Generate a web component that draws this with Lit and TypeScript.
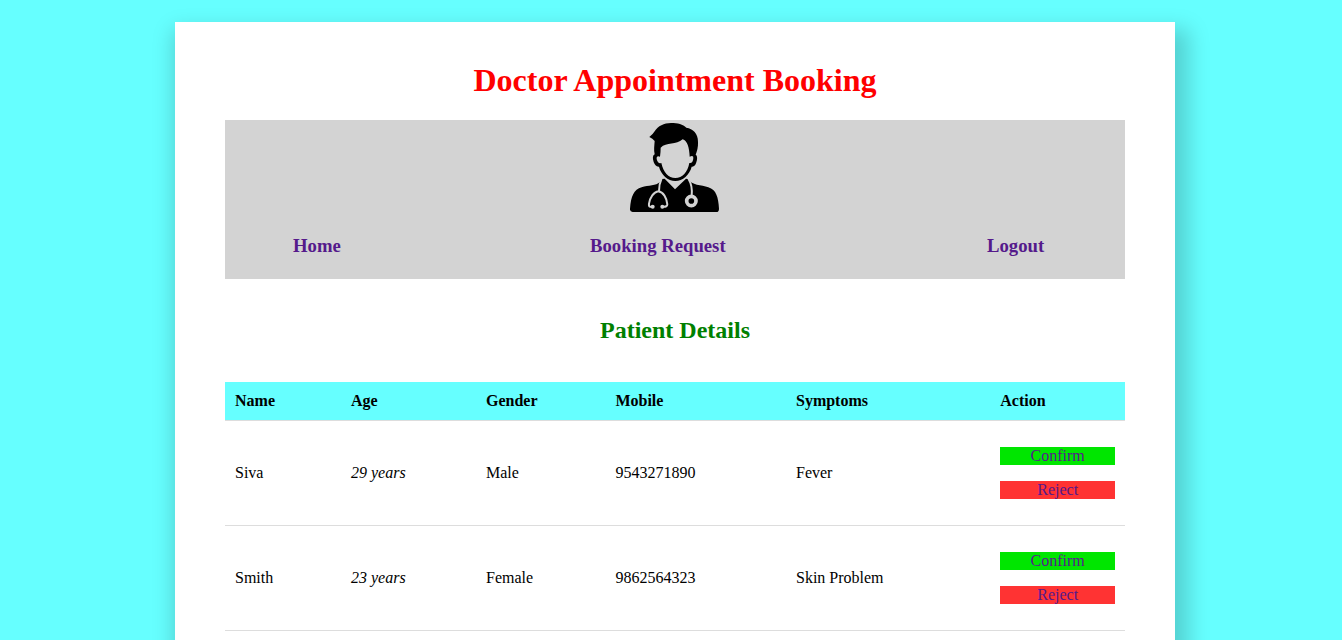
import { LitElement, html, css } from "lit";
import { customElement } from "lit/decorators.js";

interface Patient {
  name: string;
  age: number;
  gender: string;
  mobile: string;
  symptoms: string;
}

const PATIENTS: Patient[] = [
  { name: "Siva", age: 29, gender: "Male", mobile: "9543271890", symptoms: "Fever" },
  { name: "Smith", age: 23, gender: "Female", mobile: "9862564323", symptoms: "Skin Problem" },
];

const COLUMNS = ["Name", "Age", "Gender", "Mobile", "Symptoms", "Action"];

@customElement("app-root")
export class AppRoot extends LitElement {
  static styles = css`
    :host {
      display: block;
      box-sizing: border-box;
      height: 640px;
      overflow: hidden;
      padding: 22px 167px 0 175px;
      background: #66ffff;
      color: #000;
      font: 16px/18px "Liberation Serif", "Times New Roman", serif;
    }
    .card {
      box-sizing: border-box;
      width: 1000px;
      height: 760px;
      padding: 40px 50px 0;
      background: #fff;
      box-shadow: 6px 15px 20px 8px rgba(0, 0, 0, 0.18);
    }
    h1 {
      margin: 0 0 21px;
      font-size: 32px;
      line-height: 37px;
      text-align: center;
      color: #f00;
    }
    .banner {
      box-sizing: border-box;
      height: 159px;
      padding-top: 2px;
      background: #d3d3d3;
    }
    .logo {
      display: block;
      width: 90px;
      height: 90px;
      margin: 0 auto;
    }
    .nav {
      display: grid;
      grid-template-columns: 297px 397px auto;
      padding: 23px 0 0 68px;
      font-size: 18.72px;
      line-height: 21px;
      font-weight: bold;
    }
    a {
      color: #551a8b;
      text-decoration: none;
    }
    h2 {
      margin: 37px 0 38px;
      font-size: 24px;
      line-height: 28px;
      text-align: center;
      color: #008000;
    }
    table {
      width: 900px;
      table-layout: fixed;
      border-collapse: separate;
      border-spacing: 0;
    }
    th, td {
      padding: 10px;
      text-align: left;
      border-bottom: 1px solid #ddd;
    }
    th { background: #66ffff; }
    .c1 { width: 116px; }
    .c2 { width: 135px; }
    .c3 { width: 129.4px; }
    .c4 { width: 180.6px; }
    .c5 { width: 204.3px; }
    .age { font-style: italic; }
    .action {
      margin: 16px 0;
      text-align: center;
    }
    .confirm { background: #00e600; }
    .reject { background: #ff3333; }
    .tube {
      fill: none;
      stroke: #d3d3d3;
      stroke-width: 6;
      stroke-linecap: round;
      stroke-linejoin: round;
    }
    .disc {
      fill: #000;
      stroke: #d3d3d3;
      stroke-width: 11;
    }
  `;

  render() {
    return html`
      <main class="card">
        <h1>Doctor Appointment Booking</h1>
        <header class="banner">
          <svg class="logo" viewBox="30 21 270 270" role="img" aria-label="Doctor">
            <path
              fill-rule="evenodd"
              d="M88 66Q98 59 104 49C114 33 132 24 153 24C173 24 189 28 199 38C219 41 234 55 234 80C235 96 231 108 227 119C233 123 232 133 229 142C226 152 222 156 215 155C209 179 188 198 166 198C144 198 123 179 117 155C109 156 104 149 101 141C97 130 98 121 104 118C101 105 103 92 104 78Q98 71 88 66Z
                 M122 98C139 81 169 90 188 73C202 78 208 97 209 125Q221 120 220 129Q219 146 208 144C203 171 187 189 166 189C145 189 130 171 124 144Q113 147 110 132Q109 120 120 125Q122 112 122 98Z"
            />
            <path
              d="M38 291Q29 291 30 281C33 244 41 224 65 217C85 211 109 212 119 202L126 192L134 191L165 223L198 191L207 193C213 211 245 210 265 217C289 224 295 248 297 281Q297 291 289 291Z"
            />
            <path class="tube" d="M124 193Q117 207 117 228M97 275H90Q86 275 87 266C90 247 101 231 115 229C130 231 140 248 142 268Q142 276 129 275" />
            <circle cx="98" cy="275" r="6" fill="#d3d3d3" />
            <circle cx="127" cy="275" r="6" fill="#d3d3d3" />
            <path class="tube" d="M206 193C215 207 217 224 215 244" />
            <circle class="disc" cx="214" cy="258" r="14" />
          </svg>
          <nav class="nav">
            <a href="#">Home</a>
            <a href="#">Booking Request</a>
            <a href="#">Logout</a>
          </nav>
        </header>
        <h2>Patient Details</h2>
        <table>
          <colgroup>
            <col class="c1" /><col class="c2" /><col class="c3" /><col class="c4" /><col class="c5" /><col />
          </colgroup>
          <thead>
            <tr>${COLUMNS.map((c) => html`<th>${c}</th>`)}</tr>
          </thead>
          <tbody>
            ${PATIENTS.map(
              (p) => html`<tr>
                <td>${p.name}</td>
                <td class="age">${p.age} years</td>
                <td>${p.gender}</td>
                <td>${p.mobile}</td>
                <td>${p.symptoms}</td>
                <td>
                  <p class="action confirm"><a href="#">Confirm</a></p>
                  <p class="action reject"><a href="#">Reject</a></p>
                </td>
              </tr>`
            )}
          </tbody>
        </table>
      </main>
    `;
  }
}
